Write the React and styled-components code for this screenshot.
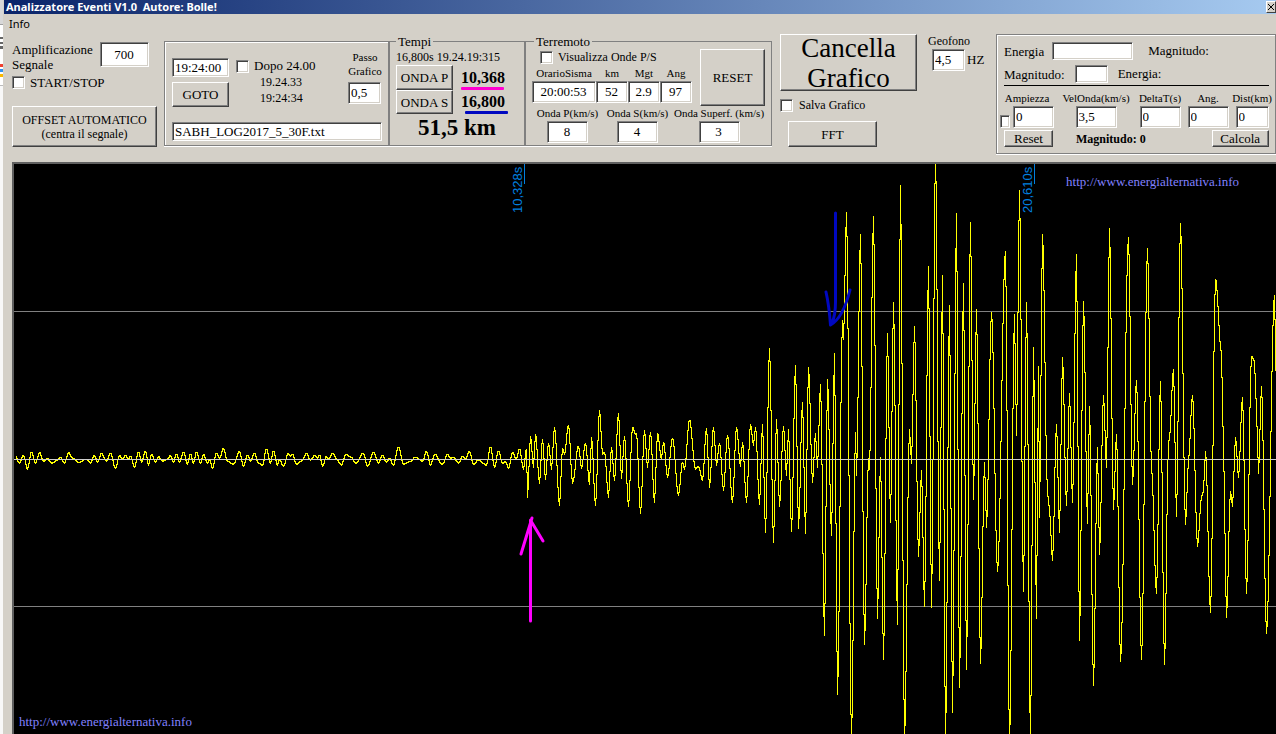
import React, { useState } from 'react';
import styled, { createGlobalStyle } from 'styled-components';

const GlobalStyle = createGlobalStyle`
  * {
    box-sizing: border-box;
  }

  body {
    margin: 0;
    overflow: hidden;
    background: #d4d0c8;
    color: #000;
    font-family: 'Liberation Serif', serif;
    font-size: 13px;
  }
`;

const Screen = styled.div`
  display: flex;
  height: 100vh;
`;

const Strip = styled.div`
  width: 4px;
  border-right: 1px solid #d4d0c8;
  background: linear-gradient(
    #d8d8d8 0 24px, #a0a0a0 24px 25px, #fff 25px 37px, #666 37px 39px, #fff 39px 42px, #666 42px 44px,
    #fff 44px 46px, #666 46px 49px, #fff 49px 64px, #f04030 64px 67px, #fff 67px 69px, #3090f0 69px 72px,
    #fff 72px 74px, #f8b800 74px 77px, #fff 77px 85px, #bbb 85px 86px, #f8f8f8 86px
  );
`;

const Window = styled.div`
  flex: 1;
  min-width: 0;
  display: flex;
  flex-direction: column;
`;

const TitleBar = styled.header`
  display: flex;
  justify-content: space-between;
  align-items: center;
  height: 14px;
  padding-left: 2px;
  background: linear-gradient(to right, #0a246a, #a6caf0);
  color: #fff;
  font: bold 11px/14px 'Noto Sans', sans-serif;
  white-space: pre;
`;

const Close = styled.button`
  display: flex;
  align-items: center;
  justify-content: center;
  width: 10px;
  height: 12px;
  padding: 0;
  background: #d4d0c8;
  border: 1px solid;
  border-color: #fff #404040 #404040 #fff;
`;

const Menu = styled.nav`
  height: 18px;
  padding-left: 2px;
`;

const MenuItem = styled.button`
  padding: 0 3px;
  border: none;
  background: transparent;
  font: 11px/20px 'Noto Sans', sans-serif;
`;

const Toolbar = styled.div`
  display: flex;
  align-items: flex-start;
  height: 130px;
  padding-left: 8px;
`;

const Group = styled.div`
  flex: none;
  width: ${props => props.$width}px;
  padding-top: ${props => props.$top || 0}px;
  margin-right: ${props => props.$gap || 0}px;
`;

const Panel = styled.div`
  flex: ${props => (props.$grow ? '1' : 'none')};
  width: ${props => props.$width}px;
  height: ${props => props.$height}px;
  margin-top: ${props => props.$top}px;
  padding: ${props => props.$pad};
  border: 1px solid #808080;
  box-shadow: 0 1px #fff, inset 1px 1px #fff;
`;

const Fieldset = styled.fieldset`
  flex: none;
  width: ${props => props.$width}px;
  height: 112px;
  min-width: 0;
  margin: 2px 0 0;
  padding: 0 6px;
  border: 1px solid #808080;
  box-shadow: 0 1px #fff;
`;

const Legend = styled.legend`
  margin-left: ${props => props.$indent || 0}px;
  padding: 0 2px;
  line-height: 15px;
`;

const Row = styled.div`
  display: flex;
  align-items: ${props => props.$align || 'center'};
  justify-content: ${props => props.$justify || 'flex-start'};
  gap: ${props => props.$gap || 0}px;
  margin-top: ${props => props.$top || 0}px;
  padding-left: ${props => props.$indent || 0}px;
`;

const Column = styled.div`
  width: ${props => (props.$width ? props.$width + 'px' : 'auto')};
  padding-top: ${props => props.$top || 0}px;
  flex: none;
`;

const Label = styled.label`
  display: block;
  font-size: ${props => props.$size || 13}px;
  line-height: ${props => props.$line || 15}px;
  text-align: ${props => (props.$center ? 'center' : 'left')};
  white-space: nowrap;
`;

const Text = styled.div`
  font-size: ${props => props.$size || 13}px;
  font-weight: ${props => (props.$bold ? 'bold' : 'normal')};
  line-height: ${props => props.$line || 16}px;
  text-align: ${props => (props.$center ? 'center' : 'left')};
  white-space: nowrap;
`;

const Input = styled.input`
  display: block;
  flex: none;
  width: ${props => props.$width}px;
  height: ${props => props.$height || 22}px;
  margin: 0;
  padding: 0 3px 0 2px;
  background: #fff;
  border: 1px solid;
  border-color: #808080 #fff #fff #808080;
  border-radius: 0;
  box-shadow: inset 1px 1px #404040, inset -1px -1px #d4d0c8;
  color: #000;
  font: 13px 'Liberation Serif', serif;
  text-align: ${props => (props.$center ? 'center' : 'left')};
  outline: none;
`;

const Check = styled.input`
  appearance: none;
  flex: none;
  width: ${props => props.$width || 13}px;
  height: 13px;
  margin: 0;
  background: #fff;
  border: 1px solid;
  border-color: #808080 #fff #fff #808080;
  box-shadow: inset 1px 1px #404040, inset -1px -1px #d4d0c8;

  &:checked {
    background: #404040;
  }
`;

const Button = styled.button`
  display: flex;
  align-items: center;
  justify-content: center;
  width: ${props => props.$width}px;
  height: ${props => props.$height}px;
  padding: 0;
  background: #d4d0c8;
  border: 1px solid;
  border-color: #fff #404040 #404040 #fff;
  box-shadow: inset -1px -1px #808080;
  color: #000;
  font: ${props => props.$size || 13}px/${props => props.$line || 15}px 'Liberation Serif', serif;
`;

const Field = styled.div`
  flex: none;
  display: flex;
  flex-direction: column;
  align-items: center;
  width: ${props => props.$width}px;
`;

const Reading = styled.output`
  position: relative;
  display: block;
  font-size: 16px;
  font-weight: bold;
  line-height: 24px;

  &::after {
    content: '';
    position: absolute;
    left: ${props => props.$shift || 0}px;
    bottom: 0;
    width: 43px;
    height: 3px;
    border-radius: 1px;
    background: ${props => props.$color};
  }
`;

const Rule = styled.hr`
  height: 1px;
  margin: 2px 6px 5px 7px;
  border: none;
  background: #000;
`;

const Chart = styled.main`
  position: relative;
  flex: 1;
  min-height: 0;
  margin-left: 8px;
  background: #000;
  border: 2px solid #606060;
  border-width: 2px 0 0 2px;
`;

const Plot = styled.svg`
  display: block;
  width: 100%;
  height: 100%;
`;

const SiteLink = styled.a`
  position: absolute;
  color: #8080ff;
  font-size: 13px;
  line-height: 15px;
  text-decoration: none;
  ${props => (props.$top ? 'top: 10px; right: 37px;' : 'bottom: 5px; left: 5px;')}
`;

// turning points of the trace, as x, y pairs
const samples = [
  15,456, 19,463, 23,455, 27,469, 31,451, 35,463, 39,452, 43,461, 47,458, 51,463, 57,460, 60,457,
  64,463, 68,452, 72,458, 78,462, 86,459, 90,463, 94,455, 97,462, 101,453, 106,461, 110,453, 115,468,
  119,455, 122,459, 125,455, 128,459, 130,455, 134,467, 138,451, 141,462, 145,450, 148,465, 151,454,
  155,462, 158,456, 162,461, 167,459, 170,455, 173,462, 176,453, 179,462, 183,451, 187,464, 190,453,
  193,463, 196,451, 200,463, 203,454, 207,463, 209,459, 212,468, 216,452, 219,458, 223,448, 227,461,
  233,464, 239,451, 243,466, 247,454, 250,461, 254,453, 258,463, 262,465, 266,448, 270,463, 273,450,
  277,465, 279,459, 283,466, 288,453, 290,456, 292,454, 296,464, 301,461, 306,453, 310,460, 314,455,
  317,458, 319,454, 322,466, 326,456, 328,459, 332,453, 337,460, 341,465, 345,454, 351,457, 355,463,
  363,453, 367,466, 373,452, 378,463, 382,455, 386,462, 389,458, 393,465, 398,446, 403,464, 410,461,
  415,457, 422,461, 426,451, 430,465, 434,454, 442,464, 447,454, 450,458, 453,457, 458,463, 462,456,
  465,459, 469,451, 473,464, 478,460, 486,465, 490,446, 494,467, 498,450, 502,463, 505,461, 508,468,
  512,452, 516,459, 519,448, 523,469, 526,448, 527,497, 530,435, 533,467, 535,433, 539,483, 542,438,
  545,479, 548,442, 551,469, 554,426, 559,505, 562,447, 564,454, 568,424, 572,483, 578,445, 581,468,
  585,442, 589,484, 591,436, 595,505, 599,409, 602,454, 604,451, 608,497, 611,446, 614,480, 618,412,
  621,478, 624,435, 628,506, 632,426, 635,434, 636,432, 640,513, 644,429, 647,467, 650,431, 654,502,
  657,432, 661,459, 663,441, 667,477, 672,437, 678,495, 682,461, 684,469, 689,419, 695,469, 698,466,
  702,480, 706,427, 709,487, 713,426, 716,465, 719,442, 723,490, 727,434, 732,502, 736,426, 740,466,
  742,441, 746,502, 750,423, 753,445, 755,426, 759,504, 762,423, 765,532, 769,347, 773,542, 776,418,
  779,506, 783,425, 786,475, 788,428, 791,531, 795,364, 798,528, 802,401, 805,533, 808,366, 812,482,
  815,432, 817,467, 820,383, 824,635, 827,378, 831,535, 834,352, 837,694, 842,319, 843,339, 846,211,
  851,740, 855,431, 856,475, 860,233, 864,644, 868,457, 869,469, 873,215, 877,618, 880,456, 883,659,
  887,332, 890,522, 893,301, 897,624, 900,184, 904,740, 909,428, 911,463, 914,325, 918,556, 921,469,
  924,606, 928,265, 931,607, 935,150, 939,580, 942,274, 945,745, 949,304, 952,712, 956,212, 959,687,
  963,282, 966,669, 970,221, 973,499, 976,308, 980,663, 984,461, 986,527, 991,311, 997,571, 1005,250,
  1009,745, 1014,313, 1016,435, 1019,189, 1023,591, 1026,301, 1030,745, 1033,346, 1036,618, 1038,365,
  1039,517, 1042,233, 1047,492, 1049,510, 1052,560, 1056,423, 1059,532, 1062,356, 1066,505, 1069,392,
  1072,502, 1076,253, 1079,640, 1083,300, 1087,523, 1089,405, 1093,685, 1097,446, 1099,554, 1103,394,
  1106,467, 1109,227, 1113,509, 1116,433, 1120,661, 1128,236, 1132,484, 1136,379, 1141,659, 1147,247,
  1151,467, 1156,593, 1160,380, 1164,664, 1168,443, 1169,437, 1173,368, 1176,516, 1180,222, 1185,524,
  1188,460, 1192,394, 1197,546, 1201,497, 1203,490, 1205,450, 1210,612, 1215,278, 1221,353, 1223,450,
  1226,617, 1230,490, 1232,506, 1235,436, 1238,477, 1242,396, 1246,593, 1251,355, 1254,361, 1256,410,
  1258,473, 1261,385, 1266,633, 1274,294, 1276,395,
];

// one vertical run per column, joined halfway between neighbouring values
const tracePath = points => {
  const values = [points[1]];
  for (let i = 2; i < points.length; i += 2) {
    const [x0, y0, x1, y1] = points.slice(i - 2, i + 2);
    for (let x = x0 + 1; x <= x1; x++) {
      const ease = (1 - Math.cos((Math.PI * (x - x0)) / (x1 - x0))) / 2;
      values.push(Math.round(y0 + (y1 - y0) * ease));
    }
  }
  let d = `M${points[0]}.5 ${values[0]}.5`;
  for (let i = 0; i < values.length - 1; i++) {
    const middle = Math.floor((values[i] + values[i + 1]) / 2);
    d += `V${values[i]}.5V${middle}.5H${points[0] + i + 1}.5`;
  }
  return d;
};

const quakeFields = [
  { id: 'orario', label: 'OrarioSisma', value: '20:00:53', width: 64 },
  { id: 'km', label: 'km', value: '52', width: 32 },
  { id: 'mgt', label: 'Mgt', value: '2.9', width: 32 },
  { id: 'ang', label: 'Ang', value: '97', width: 32 },
];

const waveFields = [
  { id: 'ondap', label: 'Onda P(km/s)', value: '8', width: 71 },
  { id: 'ondas', label: 'Onda S(km/s)', value: '4', width: 69 },
  { id: 'superf', label: 'Onda Superf. (km/s)', value: '3', width: 94 },
];

const magnitudeFields = [
  { id: 'ampiezza', label: 'Ampiezza', value: '0', width: 60, input: 41, check: true },
  { id: 'velonda', label: 'VelOnda(km/s)', value: '3,5', width: 78, input: 41 },
  { id: 'deltat', label: 'DeltaT(s)', value: '0', width: 50, input: 41 },
  { id: 'angolo', label: 'Ang.', value: '0', width: 46, input: 41 },
  { id: 'dist', label: 'Dist(km)', value: '0', width: 42, input: 33 },
];

function Marker({ x, children }) {
  return (
    <g>
      <line x1={x} x2={x} y1="164" y2="184" stroke="#0080e0" shapeRendering="crispEdges" />
      <text
        transform={`translate(${x - 3} 213) rotate(-90)`}
        fill="#0080e0"
        fontFamily="Liberation Sans, sans-serif"
        fontSize="13"
      >
        {children}
      </text>
    </g>
  );
}

function SignalChart() {
  const site = 'http://www.energialternativa.info';

  return (
    <Chart>
      <Plot viewBox="14 164 1262 570" preserveAspectRatio="none">
        <g stroke="#808080" shapeRendering="crispEdges">
          <line x1="14" x2="1276" y1="311.5" y2="311.5" />
          <line x1="14" x2="1276" y1="606.5" y2="606.5" />
        </g>
        <Marker x={524.5}>10,328s</Marker>
        <Marker x={1034.5}>20,610s</Marker>
        <path d={tracePath(samples)} fill="none" stroke="#ff0" shapeRendering="crispEdges" />
        <line x1="14" x2="1276" y1="459.5" y2="459.5" stroke="#d0d0d0" shapeRendering="crispEdges" />
        <path
          d="M530.5 621L530.5 520M532 518L521 554M531 521L543 541"
          fill="none"
          stroke="#f0f"
          strokeWidth="3"
          strokeLinecap="round"
        />
        <path
          d="M835.5 213V302Q835.5 315 832 323M826 292Q829 305 830.5 325M850 290Q843 318 830.5 325"
          fill="none"
          stroke="#0008c0"
          strokeWidth="3"
          strokeLinecap="round"
        />
      </Plot>
      <SiteLink href={site} $top>{site}</SiteLink>
      <SiteLink href={site}>{site}</SiteLink>
    </Chart>
  );
}

function App() {
  const [checks, setChecks] = useState({});

  const check = (id, width) => (
    <Check
      type="checkbox"
      id={id}
      aria-label={id}
      $width={width}
      checked={!!checks[id]}
      onChange={() => setChecks({ ...checks, [id]: !checks[id] })}
    />
  );

  return (
    <Screen>
      <GlobalStyle />
      <Strip />
      <Window>
        <TitleBar>
          <span>Analizzatore Eventi V1.0  Autore: Bolle!</span>
          <Close aria-label="Chiudi">
            <svg width="6" height="6" viewBox="0 0 6 6" stroke="#000">
              <path d="M0 0L6 6M6 0L0 6" />
            </svg>
          </Close>
        </TitleBar>
        <Menu>
          <MenuItem>Info</MenuItem>
        </Menu>

        <Toolbar>
          <Group $width={145} $top={10} $gap={7}>
            <Row $align="flex-start" $justify="space-between">
              <Label htmlFor="amp">Amplificazione<br />Segnale</Label>
              <Column $width={57}>
                <Input id="amp" defaultValue="700" $width={49} $height={25} $center />
              </Column>
            </Row>
            <Row $top={3} $gap={5}>
              {check('start')}
              <Label htmlFor="start">START/STOP</Label>
            </Row>
            <Row $top={16}>
              <Button $width={145} $height={41} $size={12} $line={14}>
                <span>OFFSET AUTOMATICO<br />(centra il segnale)</span>
              </Button>
            </Row>
          </Group>

          <Panel $width={225} $height={105} $top={9} $pad="8px 6px 0 7px">
            <Row $align="flex-start" $gap={7}>
              <Column $width={57} $top={8}>
                <Input aria-label="Orario" defaultValue="19:24:00" $width={57} $height={19} />
                <Row $top={5}>
                  <Button $width={57} $height={25}>GOTO</Button>
                </Row>
              </Column>
              <Column $width={105} $top={8}>
                <Row $gap={5}>
                  {check('dopo')}
                  <Label htmlFor="dopo" $line={16}>Dopo 24.00</Label>
                </Row>
                <Row $indent={24}>
                  <Text $size={12}>19.24.33<br />19:24:34</Text>
                </Row>
              </Column>
              <Column $width={34}>
                <Label htmlFor="passo" $size={11} $line={14} $center>Passo<br />Grafico</Label>
                <Row $top={4}>
                  <Input id="passo" defaultValue="0,5" $width={33} />
                </Row>
              </Column>
            </Row>
            <Row $top={15}>
              <Input aria-label="File" defaultValue="SABH_LOG2017_5_30F.txt" $width={210} $height={19} />
            </Row>
          </Panel>

          <Fieldset $width={136}>
            <Legend>Tempi</Legend>
            <Text $size={12}>16,800s 19.24.19:315</Text>
            <Row $gap={8}>
              <Column $width={57}>
                <Button $width={57} $height={25}>ONDA P</Button>
                <Button $width={57} $height={24}>ONDA S</Button>
              </Column>
              <Column>
                <Reading $color="#ff00d0">10,368</Reading>
                <Reading $color="#0008c0" $shift={4}>16,800</Reading>
              </Column>
            </Row>
            <Text $size={23} $line={28} $bold $center>51,5 km</Text>
          </Fieldset>

          <Fieldset $width={247}>
            <Legend $indent={2}>Terremoto</Legend>
            <Row $align="flex-start" $gap={8}>
              <Column $width={160}>
                <Row $gap={5} $indent={8}>
                  {check('visualizza')}
                  <Label htmlFor="visualizza" $size={12} $line={16}>Visualizza Onde P/S</Label>
                </Row>
                <Row>
                  {quakeFields.map(item => (
                    <Field key={item.id} $width={item.width}>
                      <Label htmlFor={item.id} $size={11} $line={16}>{item.label}</Label>
                      <Input id={item.id} defaultValue={item.value} $width={item.width} $center />
                    </Field>
                  ))}
                </Row>
              </Column>
              <Button $width={65} $height={57}>RESET</Button>
            </Row>
            <Row>
              {waveFields.map(item => (
                <Field key={item.id} $width={item.width}>
                  <Label htmlFor={item.id} $size={11}>{item.label}</Label>
                  <Input id={item.id} defaultValue={item.value} $width={41} $center />
                </Field>
              ))}
            </Row>
          </Fieldset>

          <Group $width={148} $top={2}>
            <Row $indent={8}>
              <Button $width={137} $height={57} $size={27} $line={30}>
                <span>Cancella<br />Grafico</span>
              </Button>
            </Row>
            <Row $indent={8} $gap={6} $top={7}>
              {check('salva')}
              <Label htmlFor="salva" $size={12}>Salva Grafico</Label>
            </Row>
            <Row $indent={16} $top={8}>
              <Button $width={89} $height={26}>FFT</Button>
            </Row>
          </Group>

          <Group $width={57} $top={2} $gap={19}>
            <Row $indent={8}>
              <Label htmlFor="geofono" $size={12}>Geofono</Label>
            </Row>
            <Row $indent={12} $gap={2}>
              <Input id="geofono" defaultValue="4,5" $width={33} />
              <Text>HZ</Text>
            </Row>
          </Group>

          <Panel $grow $height={120} $top={2} $pad="7px 0 0 0">
            <Row $indent={7} $gap={8}>
              <Label htmlFor="energia">Energia</Label>
              <Input id="energia" $width={81} $height={18} />
              <Row $indent={7}>
                <Text>Magnitudo:</Text>
              </Row>
            </Row>
            <Row $indent={7} $gap={10} $top={5}>
              <Label htmlFor="magnitudo">Magnitudo:</Label>
              <Input id="magnitudo" $width={33} $height={18} />
              <Text>Energia:</Text>
            </Row>
            <Rule />
            <Row $align="flex-start">
              {magnitudeFields.map(item => (
                <Field key={item.id} $width={item.width}>
                  <Label htmlFor={item.id} $size={11}>{item.label}</Label>
                  <Row $gap={3} $align="flex-end">
                    {item.check && check('usa ampiezza', 10)}
                    <Input id={item.id} defaultValue={item.value} $width={item.input} />
                  </Row>
                </Field>
              ))}
            </Row>
            <Row $indent={7} $top={2}>
              <Button $width={49} $height={17}>Reset</Button>
              <Row $indent={23}>
                <Text $size={12} $bold>Magnitudo: 0</Text>
              </Row>
              <Row $indent={66}>
                <Button $width={57} $height={17}>Calcola</Button>
              </Row>
            </Row>
          </Panel>
        </Toolbar>

        <SignalChart />
      </Window>
    </Screen>
  );
}

export default App;
